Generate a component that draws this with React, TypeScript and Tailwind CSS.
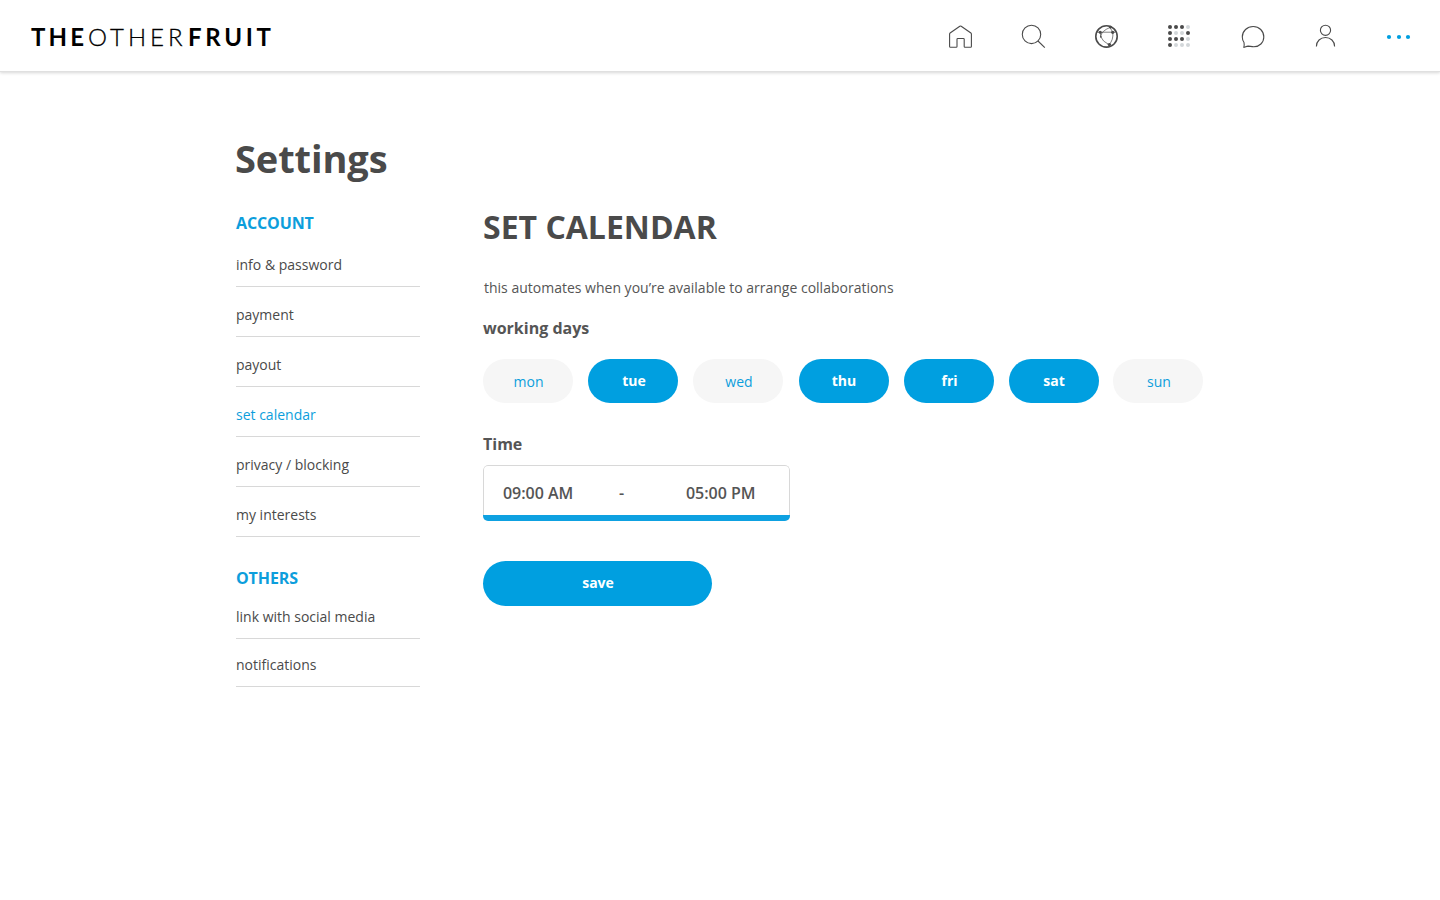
import type { ReactNode } from "react";

const days = [
  { label: "mon", on: false, gap: "ml-0 pl-px" },
  { label: "tue", on: true, gap: "ml-[15px] pl-0.5" },
  { label: "wed", on: false, gap: "ml-[15px] pl-0.5" },
  { label: "thu", on: true, gap: "ml-4" },
  { label: "fri", on: true, gap: "ml-[15px] pl-px" },
  { label: "sat", on: true, gap: "ml-[15px]" },
  { label: "sun", on: false, gap: "ml-3.5 pl-0.5" },
];

const accountLinks = ["info & password", "payment", "payout", "set calendar", "privacy / blocking", "my interests"];
const otherLinks = ["link with social media", "notifications"];

const dotRows = ["1110", "1001", "1110", "1000"];

function Icon({ children }: { children: ReactNode }) {
  return (
    <svg width="28" height="28" viewBox="0 0 28 28" fill="none" stroke="#4a4a4a" strokeWidth="1.1" strokeLinejoin="round" className="shrink-0">
      {children}
    </svg>
  );
}

function Nav() {
  return (
    <nav className="flex items-center gap-[45px]">
      <Icon>
        <path d="M2.6 12 Q2.6 11.4 3.1 11 L12.8 4.3 Q13.5 3.8 14.2 4.3 L23.9 11 Q24.4 11.4 24.4 12 V24.4 Q24.4 25.2 23.6 25.2 H18 Q17.2 25.2 17.2 24.4 V17.3 Q17.2 16.5 16.4 16.5 H10.8 Q10 16.5 10 17.3 V24.4 Q10 25.2 9.2 25.2 H3.4 Q2.6 25.2 2.6 24.4 Z" />
      </Icon>
      <Icon>
        <circle cx="11.5" cy="12.4" r="9.2" />
        <path d="M18 19 L24.8 25.6" />
      </Icon>
      <Icon>
        <circle cx="13.5" cy="14.4" r="10.7" strokeWidth="1.6" />
        <path d="M16.8 5.5 Q8.5 9 7.6 14.5 Q9.5 19.5 16 22.7 Q20.6 18 19.8 10.3 L17 5.5 M4 10.2 H22.6 M7.6 14.5 V10.3" strokeWidth="0.7" />
        <g fill="#4a4a4a" stroke="none">
          <circle cx="17.4" cy="5.2" r="1.4" />
          <circle cx="7.2" cy="10.3" r="1.5" />
          <circle cx="19.7" cy="10.3" r="1.6" />
          <circle cx="16.4" cy="22.6" r="1.7" />
          <circle cx="7.9" cy="14.8" r="0.9" />
        </g>
      </Icon>
      <Icon>
        {dotRows.map((row, y) =>
          row.split("").map((v, x) => (
            <circle key={`${x}-${y}`} cx={4 + x * 6} cy={5 + y * 6} r="2" stroke="none" fill={v === "1" ? "#4a4a4a" : "#d3d7da"} />
          )),
        )}
      </Icon>
      <Icon>
        <path d="M4.8 25.4 C5.5 23.4 5.3 22 5 20.5 C3.8 18.8 3.3 17 3.3 15 C3.3 9 8.2 4.5 14.2 4.5 C20.2 4.5 24.8 9 24.8 15 C24.8 20.6 20.4 24.8 14.8 24.8 C12.4 24.8 10.8 24.1 9.2 24.1 C7.6 24.2 6.1 25 4.8 25.4 Z" />
      </Icon>
      <Icon>
        <circle cx="13.5" cy="8.3" r="5.1" />
        <path d="M4.4 24.4 C4.4 19.2 8.4 15.5 13.5 15.5 C18.6 15.5 22.6 19.2 22.6 24.4" />
      </Icon>
      <Icon>
        <g fill="#009fe0" stroke="none">
          <circle cx="4" cy="15" r="2.1" />
          <circle cx="14" cy="15" r="2.1" />
          <circle cx="23" cy="15" r="2.1" />
        </g>
      </Icon>
    </nav>
  );
}

function LinkRow({ label, className }: { label: string; className: string }) {
  return (
    <li className={`border-b border-[#d8d8d8] pb-[11px] text-sm leading-5 ${className} ${label === "set calendar" ? "text-[#0c9edc]" : ""}`}>
      {label}
    </li>
  );
}

export default function App() {
  return (
    <div className="min-h-[900px] bg-white font-['Open_Sans',sans-serif] text-[#4a4a4a]">
      <header className="flex h-[72px] items-center justify-between border-b border-[#e0e0e0] pl-[31px] pr-[27px] shadow-[0_1px_3px_rgba(0,0,0,0.16)]">
        <div className="flex items-baseline pt-0.5 font-['Lato',sans-serif] text-[24px] leading-8 text-black">
          <span className="w-[57px] font-bold tracking-[3.2px]">THE</span>
          <span className="w-[100px] font-light tracking-[4px] [-webkit-text-stroke:0.3px_#000]">OTHER</span>
          <span className="font-bold tracking-[3.7px]">FRUIT</span>
        </div>
        <Nav />
      </header>

      <main className="pl-[235px] pt-[59px]">
        <h1 className="text-[38px] font-bold leading-[54px] tracking-[-0.1px]">Settings</h1>
        <div className="flex pt-0.5">
          <aside className="ml-px w-[184px] pt-6">
            <h2 className="text-base font-bold leading-6 tracking-[-0.12px] text-[#0c9edc]">ACCOUNT</h2>
            <ul className="pt-0.5">
              {accountLinks.map((l) => (
                <LinkRow key={l} label={l} className="pt-[18px]" />
              ))}
            </ul>
            <h2 className="mt-[29px] text-base font-bold leading-6 tracking-[-0.12px] text-[#0c9edc]">OTHERS</h2>
            <ul className="pt-px">
              {otherLinks.map((l) => (
                <LinkRow key={l} label={l} className="pt-4" />
              ))}
            </ul>
          </aside>

          <section className="ml-[63px] pt-5">
            <h2 className="text-[32px] font-bold leading-10">SET CALENDAR</h2>
            <p className="ml-px mt-[31px] text-sm leading-5 text-[#555555]">this automates when you’re available to arrange collaborations</p>
            <h3 className="mt-[18px] text-base font-bold leading-6 text-[#555555]">working days</h3>
            <div className="mt-[19px] flex">
              {days.map((d) => (
                <button
                  key={d.label}
                  className={`h-11 w-[90px] rounded-[24px] text-sm ${d.gap} ${
                    d.on ? "bg-[#009fe0] font-bold text-white" : "bg-[#f6f6f6] pt-0.5 text-[#0c9edc]"
                  }`}
                >
                  {d.label}
                </button>
              ))}
            </div>
            <h3 className="mt-[29px] text-base font-bold leading-6 text-[#555555]">Time</h3>
            <div className="mt-[9px] w-[307px] overflow-hidden rounded-[5px]">
              <div className="flex h-[50px] rounded-t-[5px] border border-b-0 border-[#d8d8d8] pl-[19px] pt-[15px] text-base font-semibold leading-6 tracking-[-0.04px] text-[#555555]">
                <span className="w-[116px]">09:00 AM</span>
                <span className="w-[67px]">-</span>
                <span>05:00 PM</span>
              </div>
              <div className="h-1.5 bg-[#0ea1e1]" />
            </div>
            <button className="mt-10 block h-[45px] w-[229px] rounded-[24px] bg-[#009fe0] pb-0.5 pl-px text-sm font-bold text-white">save</button>
          </section>
        </div>
      </main>
    </div>
  );
}
